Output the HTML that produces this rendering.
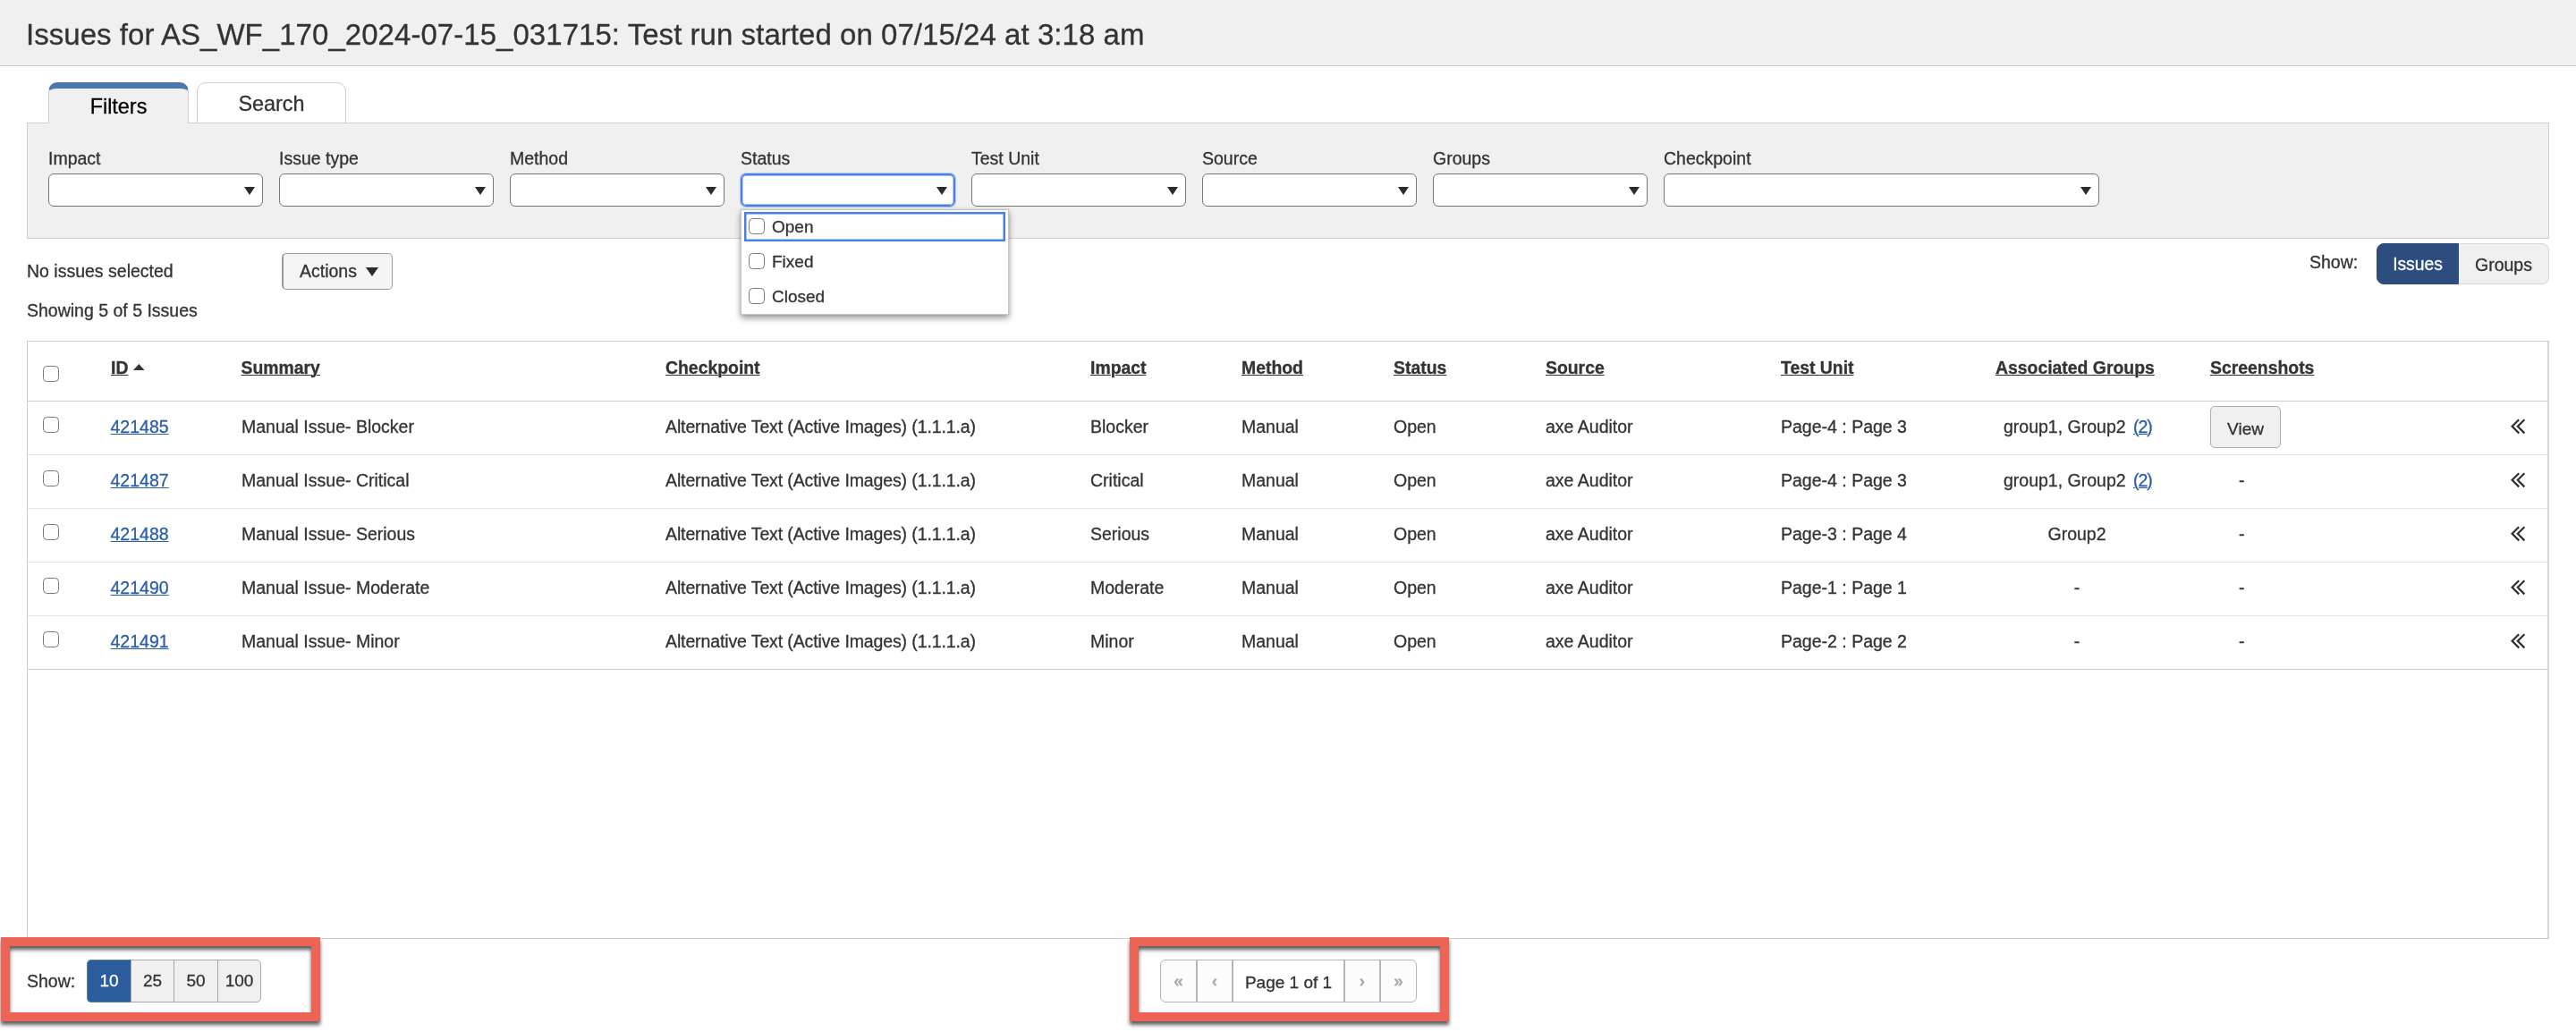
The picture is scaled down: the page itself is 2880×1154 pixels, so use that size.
<!DOCTYPE html>
<html lang="en">
<head>
<meta charset="utf-8">
<title>Issues</title>
<style>
*{box-sizing:border-box;margin:0;padding:0}
html,body{width:2880px;height:1154px;overflow:hidden;background:#fff}
body{will-change:transform;-webkit-text-stroke:.3px;font-family:"Liberation Sans",sans-serif;color:#333;position:relative;font-size:19.5px;line-height:24px}
.a{position:absolute;white-space:nowrap}
#hdr{left:0;top:0;width:2880px;height:74px;background:#f0f0f0;border-bottom:1px solid #c8c8c8}
#title{left:29px;top:17px;font-size:33px;line-height:44px;letter-spacing:.045px;color:#333}
.tab{position:absolute;text-align:center;font-size:23.4px}
#tab1{left:54px;top:92px;width:157px;height:46px;background:#f0f0f0;border:1px solid #d0d0d0;border-bottom:none;border-top:7px solid #4a77ae;border-radius:10px 10px 0 0;color:#000;line-height:39px;padding-top:1px;z-index:2}
#tab2{left:220px;top:92px;width:167px;height:46px;background:#fff;border:1px solid #cfcfcf;border-radius:10px 10px 0 0;color:#333;line-height:46px}
#panel{left:30px;top:137px;width:2820px;height:130px;background:#f0f0f0;border:1px solid #d0d0d0}
.lbl{position:absolute;top:165px;font-size:19.5px;line-height:24px;color:#333;white-space:nowrap}
.sel{position:absolute;top:194px;height:37px;width:240px;background:#fff;border:1px solid #767676;border-radius:6px}
.sel:after{content:"";position:absolute;left:218px;top:14px;border:6px solid transparent;border-top:9px solid #2b2b2b;border-bottom:none}
.sel.w:after{left:465px}
.sel.focus{border-color:#4a80e2;box-shadow:inset 0 0 0 1.4px #4a80e2,0 0 0 1px rgba(74,128,226,.35)}
#dd{left:828px;top:234px;width:300px;height:118px;background:#fff;border:1px solid #c6c6c6;box-shadow:0 4px 7px rgba(0,0,0,.38),0 0 3px rgba(0,0,0,.12);z-index:5}
.opt{position:absolute;left:3px;width:292px;height:33px;font-size:19px;line-height:24px;padding:5px 0 0 31px}
.cb{position:absolute;width:18px;height:18px;border:1.5px solid #7a7a7a;border-radius:4.5px;background:#fff}
.opt .cb{left:5px;top:7px}
.btn{position:absolute;background:#f0f0f0;border:1px solid #b4b4b4;border-radius:5px;text-align:center;white-space:nowrap}
.th{position:absolute;top:399px;font-weight:bold;font-size:19.4px;line-height:24px;text-decoration:underline;text-decoration-thickness:1.3px;text-underline-offset:1.2px;color:#333;white-space:nowrap}
.row{position:absolute;left:31px;width:2817px;height:60px;border-top:1px solid #e6e6e6}
.row span,.row a{position:absolute;top:16px;white-space:nowrap}
.row a{color:#2b5ea8;text-decoration:underline;text-decoration-thickness:1.2px;text-underline-offset:1.2px}
.row .c{text-align:center;width:200px}
.chev{position:absolute;left:2776px;top:19px;width:18px;height:18px}
.ann{position:absolute;border:10px solid #eb6455;filter:drop-shadow(0.5px 4px 2px rgba(0,0,0,.64));z-index:9}
.pg{position:absolute;top:1073px;height:48px;border:1px solid #b6b6b6;background:#fcfcfc;text-align:center;line-height:46px;color:#ababab;white-space:nowrap;font-weight:bold;font-size:19px}
.sz{position:absolute;top:1073px;height:48px;border:1px solid #a8a8a8;background:#f0f0f0;text-align:center;line-height:45px;font-size:19px;white-space:nowrap}
</style>
</head>
<body>
<div id="hdr" class="a"></div>
<div id="title" class="a">Issues for AS_WF_170_2024-07-15_031715: Test run started on 07/15/24 at 3:18 am</div>
<div id="panel" class="a"></div>
<div id="tab1" class="tab">Filters</div>
<div id="tab2" class="tab">Search</div>
<div class="lbl" style="left:54px">Impact</div>
<div class="lbl" style="left:312px">Issue type</div>
<div class="lbl" style="left:570px">Method</div>
<div class="lbl" style="left:828px">Status</div>
<div class="lbl" style="left:1086px">Test Unit</div>
<div class="lbl" style="left:1344px">Source</div>
<div class="lbl" style="left:1602px">Groups</div>
<div class="lbl" style="left:1860px">Checkpoint</div>
<div class="sel" style="left:54px"></div>
<div class="sel" style="left:312px"></div>
<div class="sel" style="left:570px"></div>
<div class="sel focus" style="left:828px"></div>
<div class="sel" style="left:1086px"></div>
<div class="sel" style="left:1344px"></div>
<div class="sel" style="left:1602px"></div>
<div class="sel w" style="left:1860px;width:487px"></div>
<div id="dd" class="a">
<div class="opt" style="top:2px;box-shadow:inset 0 0 0 2.5px #4a80e2"><i class="cb"></i>Open</div>
<div class="opt" style="top:41px"><i class="cb"></i>Fixed</div>
<div class="opt" style="top:80px"><i class="cb"></i>Closed</div>
</div>
<div class="a" style="left:30px;top:291px">No issues selected</div>
<div class="btn" style="left:315px;top:283px;width:124px;height:41px;line-height:39px;background:#f5f5f5;border-color:#9c9c9c;border-left:2px solid #999;text-align:left;padding-left:18px">Actions<svg width="14" height="10" viewBox="0 0 14 10" style="position:absolute;left:92px;top:15px"><path d="M0 0h14L7 10z" fill="#2b2b2b"/></svg></div>
<div class="a" style="left:30px;top:335px">Showing 5 of 5 Issues</div>
<div class="a" style="left:2582px;top:281px">Show:</div>
<div class="btn" style="left:2657px;top:272px;width:92px;height:46px;line-height:46px;background:#2c4d7e;border-color:#2c4d7e;color:#fff;border-radius:8px 0 0 8px;font-size:19.3px">Issues</div>
<div class="btn" style="left:2749px;top:272px;width:101px;height:46px;line-height:46px;border-radius:0 8px 8px 0;border-color:#d8d8d8;border-left:none">Groups</div>
<div id="tbl" class="a" style="left:30px;top:381px;width:2820px;height:669px;border:1px solid #cecece;border-right:2px solid #d6d6d6"></div>
<i class="cb" style="left:48px;top:409px"></i>
<div class="th" style="left:124px">ID</div>
<div class="th" style="left:269.5px">Summary</div>
<div class="th" style="left:744px">Checkpoint</div>
<div class="th" style="left:1219px">Impact</div>
<div class="th" style="left:1388px">Method</div>
<div class="th" style="left:1558px">Status</div>
<div class="th" style="left:1728px">Source</div>
<div class="th" style="left:1991px">Test Unit</div>
<div class="th" style="left:2231px">Associated Groups</div>
<div class="th" style="left:2471px">Screenshots</div>
<svg class="a" width="13" height="7" viewBox="0 0 13 7" style="left:149.3px;top:407px"><path d="M0 7h12.6L6.3 0z" fill="#333"/></svg>
<div class="row" style="top:448px;border-top-color:#cdcdcd"><i class="cb" style="left:17px;top:17px"></i><a style="left:92.5px">421485</a><span style="left:239px">Manual Issue- Blocker</span><span style="left:713px;letter-spacing:-.12px">Alternative Text (Active Images) (1.1.1.a)</span><span style="left:1188px">Blocker</span><span style="left:1357px">Manual</span><span style="left:1527px">Open</span><span style="left:1697px">axe Auditor</span><span style="left:1960px">Page-4 : Page 3</span><span style="left:2209px">group1, Group2</span><a style="left:2354px;letter-spacing:-1.1px">(2)</a><svg class="chev" viewBox="0 0 18 18"><path d="M9.2 1.2L1.6 8.8l7.6 7.6M15.4 1.2L7.8 8.8l7.6 7.6" fill="none" stroke="#2f2f2f" stroke-width="2.2"/></svg></div>
<div class="row" style="top:508px"><i class="cb" style="left:17px;top:17px"></i><a style="left:92.5px">421487</a><span style="left:239px">Manual Issue- Critical</span><span style="left:713px;letter-spacing:-.12px">Alternative Text (Active Images) (1.1.1.a)</span><span style="left:1188px">Critical</span><span style="left:1357px">Manual</span><span style="left:1527px">Open</span><span style="left:1697px">axe Auditor</span><span style="left:1960px">Page-4 : Page 3</span><span style="left:2209px">group1, Group2</span><a style="left:2354px;letter-spacing:-1.1px">(2)</a><span style="left:2472px">-</span><svg class="chev" viewBox="0 0 18 18"><path d="M9.2 1.2L1.6 8.8l7.6 7.6M15.4 1.2L7.8 8.8l7.6 7.6" fill="none" stroke="#2f2f2f" stroke-width="2.2"/></svg></div>
<div class="row" style="top:568px"><i class="cb" style="left:17px;top:17px"></i><a style="left:92.5px">421488</a><span style="left:239px">Manual Issue- Serious</span><span style="left:713px;letter-spacing:-.12px">Alternative Text (Active Images) (1.1.1.a)</span><span style="left:1188px">Serious</span><span style="left:1357px">Manual</span><span style="left:1527px">Open</span><span style="left:1697px">axe Auditor</span><span style="left:1960px">Page-3 : Page 4</span><span class="c" style="left:2191px">Group2</span><span style="left:2472px">-</span><svg class="chev" viewBox="0 0 18 18"><path d="M9.2 1.2L1.6 8.8l7.6 7.6M15.4 1.2L7.8 8.8l7.6 7.6" fill="none" stroke="#2f2f2f" stroke-width="2.2"/></svg></div>
<div class="row" style="top:628px"><i class="cb" style="left:17px;top:17px"></i><a style="left:92.5px">421490</a><span style="left:239px">Manual Issue- Moderate</span><span style="left:713px;letter-spacing:-.12px">Alternative Text (Active Images) (1.1.1.a)</span><span style="left:1188px">Moderate</span><span style="left:1357px">Manual</span><span style="left:1527px">Open</span><span style="left:1697px">axe Auditor</span><span style="left:1960px">Page-1 : Page 1</span><span class="c" style="left:2191px">-</span><span style="left:2472px">-</span><svg class="chev" viewBox="0 0 18 18"><path d="M9.2 1.2L1.6 8.8l7.6 7.6M15.4 1.2L7.8 8.8l7.6 7.6" fill="none" stroke="#2f2f2f" stroke-width="2.2"/></svg></div>
<div class="row" style="top:688px"><i class="cb" style="left:17px;top:17px"></i><a style="left:92.5px">421491</a><span style="left:239px">Manual Issue- Minor</span><span style="left:713px;letter-spacing:-.12px">Alternative Text (Active Images) (1.1.1.a)</span><span style="left:1188px">Minor</span><span style="left:1357px">Manual</span><span style="left:1527px">Open</span><span style="left:1697px">axe Auditor</span><span style="left:1960px">Page-2 : Page 2</span><span class="c" style="left:2191px">-</span><span style="left:2472px">-</span><svg class="chev" viewBox="0 0 18 18"><path d="M9.2 1.2L1.6 8.8l7.6 7.6M15.4 1.2L7.8 8.8l7.6 7.6" fill="none" stroke="#2f2f2f" stroke-width="2.2"/></svg></div>
<div class="row" style="top:748px;height:1px;border-top-color:#cdcdcd"></div>
<div class="btn" style="left:2471px;top:454px;width:79px;height:47px;line-height:49px;border-color:#adadad;font-size:19px">View</div>
<div class="a" style="left:30px;top:1085px">Show:</div>
<div class="sz" style="left:97px;width:50px;background:#2a5c9e;border-color:#5d7ca6 #2a5c9e #5d7ca6 #5d7ca6;color:#fff;border-radius:5px 0 0 5px">10</div>
<div class="sz" style="left:146px;width:49px">25</div>
<div class="sz" style="left:194px;width:50px">50</div>
<div class="sz" style="left:243px;width:49px;border-radius:0 5px 5px 0">100</div>
<div class="pg" style="left:1297px;width:41px;border-radius:6px 0 0 6px">«</div>
<div class="pg" style="left:1338px;width:40px;">‹</div>
<div class="pg" style="left:1378px;width:125px;background:#fff;color:#333;font-size:19px;line-height:50px;font-weight:normal">Page 1 of 1</div>
<div class="pg" style="left:1503px;width:40px;">›</div>
<div class="pg" style="left:1543px;width:41px;border-radius:0 6px 6px 0">»</div>
<div class="ann" style="left:1px;top:1048px;width:357px;height:94px"></div>
<div class="ann" style="left:1263px;top:1048px;width:357px;height:94px"></div>
</body>
</html>
